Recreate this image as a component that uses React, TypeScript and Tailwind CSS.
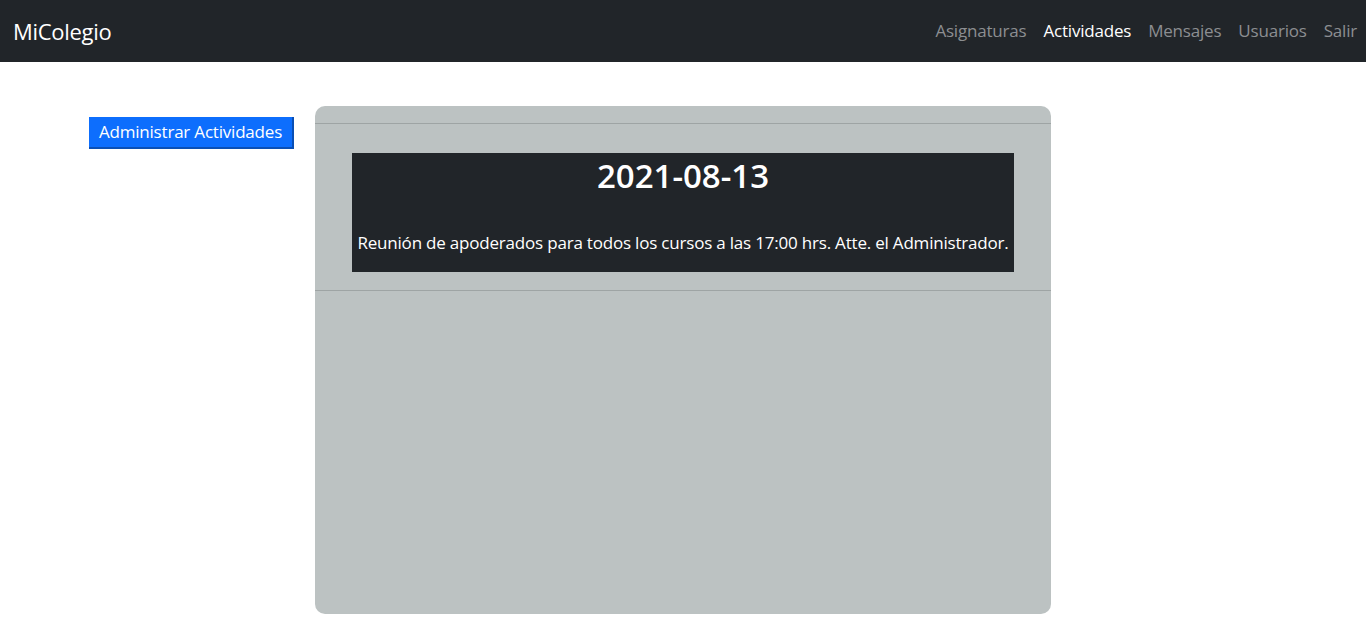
export default function App() {
  const links = [
    { label: "Asignaturas", active: false },
    { label: "Actividades", active: true },
    { label: "Mensajes", active: false },
    { label: "Usuarios", active: false },
    { label: "Salir", active: false },
  ];
  return (
    <div className="min-h-screen bg-white" style={{ fontFamily: '"Open Sans", "Noto Sans", sans-serif' }}>
      <nav className="h-[62px] bg-[#212529] flex items-center justify-between pl-[13px] pr-[9px]">
        <span className="text-white text-[22px] tracking-[-0.3px]">MiColegio</span>
        <div className="flex items-center gap-[17px] text-[17px] tracking-[-0.2px]">
          {links.map((l) => (
            <span key={l.label} className={l.active ? "text-white" : "text-[#8c8e91]"}>
              {l.label}
            </span>
          ))}
        </div>
      </nav>
      <main className="flex items-start pl-[89px] pt-[44px] gap-[21px]">
        <button className="mt-[11px] w-[205px] h-[32px] bg-[#0d6efd] text-white text-[17px] tracking-[-0.2px] border-r-2 border-b-2 border-[#0a4fb5] flex items-center justify-center">
          Administrar Actividades
        </button>
        <div className="w-[736px] h-[508px] bg-[#bcc2c2] rounded-[10px] flex flex-col">
          <div className="h-[18px] border-b border-[#9ea4a4]" />
          <div className="px-[37px] pt-[29px] pb-[18px] border-b border-[#9ea4a4]">
            <div className="bg-[#212529] h-[119px] flex flex-col items-center text-white">
              <h1 className="text-[33px] font-semibold leading-none mt-[6px]">2021-08-13</h1>
              <p className="text-[17px] tracking-[-0.2px] mt-[38px]">
                Reunión de apoderados para todos los cursos a las 17:00 hrs. Atte. el Administrador.
              </p>
            </div>
          </div>
        </div>
      </main>
    </div>
  );
}
